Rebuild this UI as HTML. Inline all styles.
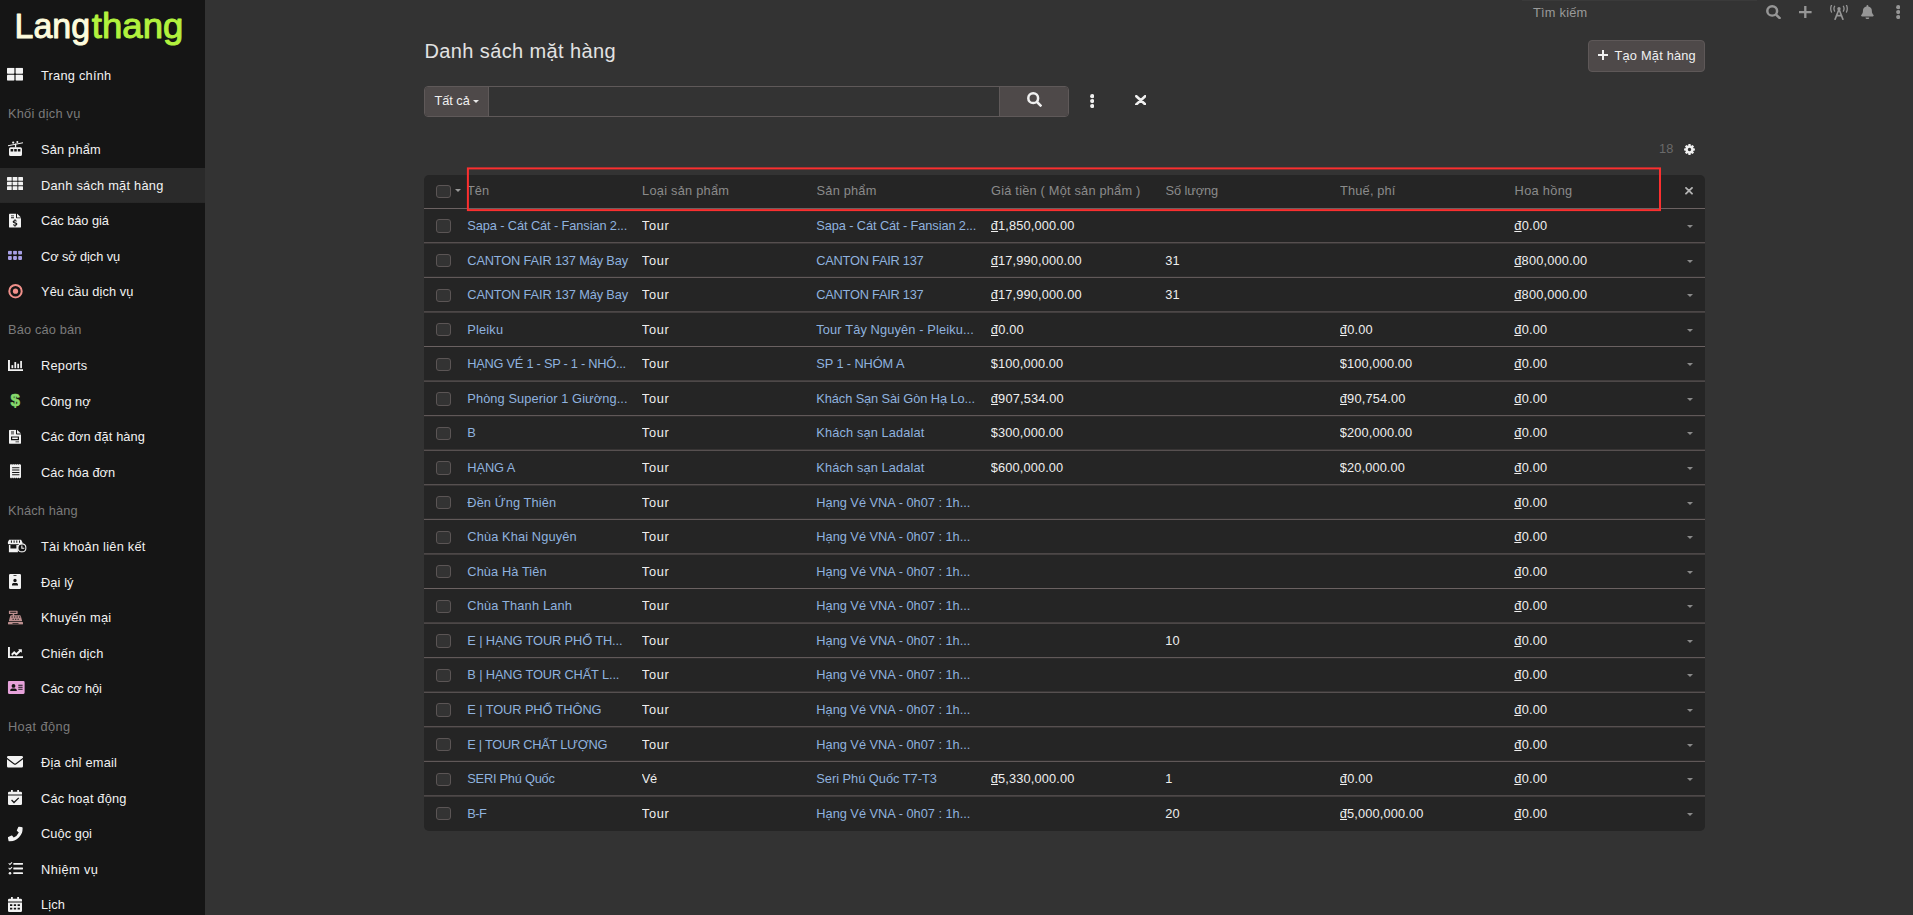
<!DOCTYPE html>
<html lang="vi"><head><meta charset="utf-8"><title>Danh sách mặt hàng</title>
<style>
*{box-sizing:border-box}
html,body{margin:0;padding:0}
body{width:1913px;height:915px;overflow:hidden;background:#333333;color:#eeeeee;font-family:"Liberation Sans",sans-serif;font-size:12.8px;position:relative}
u{text-decoration:underline;text-underline-offset:1px}
svg{display:block}
#side{position:absolute;left:0;top:0;width:205px;height:915px;background:#151515;overflow:hidden}
#logo{position:absolute;left:0;top:0}
#nav{position:absolute;left:0;top:58.400px;width:205px}
.it{position:relative;height:35.5px;line-height:35.5px;color:#f2f2f2;white-space:nowrap}
.it.on{background:linear-gradient(#2a2a2a,#2a2a2a) no-repeat;background-size:100% 34.900px}
.it .ic{position:absolute;left:0;top:-1.400px;width:30.600px;height:35.5px;display:flex;align-items:center;justify-content:center}
.it .tx{position:absolute;left:41px;top:-0.3px}
.hd{height:35.5px;line-height:35.5px;margin-top:3.2px;padding-left:8px;color:#7b7b7b;white-space:nowrap;position:relative}
.hd span{position:relative;top:-0.900px}
#main{position:absolute;left:205px;top:0;width:1708px;height:915px}
.abs{position:absolute}
#title{position:absolute;left:424.500px;top:35.700px;font-size:20px;line-height:30px;color:#e2e2e2;white-space:nowrap}
#topline{position:absolute;left:1522px;top:0;width:235px;height:1px;background:#3a3a3a}
#tsearch{position:absolute;left:1533px;top:3.700px;line-height:18px;color:#9a9a9a;white-space:nowrap}
.tic{position:absolute;color:#969696}
#create{position:absolute;left:1588px;top:40px;width:117px;height:31.500px;background:#4e4949;border:1px solid #5e5858;border-radius:4px;color:#f0f0f0}
#create .pl{position:absolute;left:8.500px;top:9.300px}
#create .tx{position:absolute;left:25.500px;top:5.500px;line-height:18px;white-space:nowrap}
#sg{position:absolute;left:424px;top:86px;width:645px;height:31px;border:1px solid #5f5959;border-radius:4px;background:#333333}
#sg .all{position:absolute;left:0;top:0;width:64px;height:29px;background:#4e4949;border-right:1px solid #5f5959;border-radius:3px 0 0 3px}
#sg .all .tx{position:absolute;left:9.500px;top:4.500px;line-height:18px;white-space:nowrap;color:#f0f0f0}
#sg .all .cr{position:absolute;left:48px;top:13px;color:#e8e8e8}
#sg .btn{position:absolute;right:0;top:0;width:69px;height:29px;background:#4e4949;border-left:1px solid #5f5959;border-radius:0 3px 3px 0;color:#f0f0f0}
#sg .btn svg{position:absolute;left:27.200px;top:5.300px}
#cnt{position:absolute;left:1659px;top:139.700px;line-height:18px;color:#6a6a6a;white-space:nowrap}
#tbl{position:absolute;left:424px;top:175px;width:1281px;height:656.300px;background:#252525;border-radius:5px;overflow:hidden}
.r{position:absolute;left:0;width:1281px;height:34.570px}
.r.h{top:0;height:34px;border-bottom:1px solid #6b6262;color:#8b8b8b}
#lines{position:absolute;left:0;top:0}
.c{position:absolute;top:0;height:100%;line-height:34px;white-space:nowrap;overflow:hidden}
.r.h .c{line-height:32.600px;height:33px}
.a{color:#8fb2df}
.cb{position:absolute;left:12.200px;top:10.400px;width:14.500px;height:13.300px;border:1px solid #5b5555;border-radius:3px;background:#333333}
.r.h .cb{top:10px}
.crt{position:absolute;color:#8a8a8a}
#red{position:absolute;left:460px;top:160px}
</style></head>
<body>
<div id="side">
<svg id="logo" width="205" height="56" viewBox="0 0 205 56"><text x="14.600" y="37.900" font-family="Liberation Sans, sans-serif" font-size="34.800" textLength="75.500" lengthAdjust="spacingAndGlyphs" stroke-width="1" stroke-linejoin="round" fill="#fdfbdc" stroke="#fdfbdc">Lang</text><text x="91.800" y="37.900" font-family="Liberation Sans, sans-serif" font-size="34.800" textLength="91.500" lengthAdjust="spacingAndGlyphs" stroke-width="1" stroke-linejoin="round" fill="#b2f23e" stroke="#b2f23e">thang</text></svg>
<div id="nav">
<div class="it"><div class="ic" style="transform:translate(0px,-0.3px);"><svg width="16" height="13" viewBox="0 0 16 13" fill="currentColor"><rect x="0" y="0" width="7.4" height="6" rx=".7"/><rect x="8.6" y="0" width="7.4" height="6" rx=".7"/><rect x="0" y="7" width="7.4" height="6" rx=".7"/><rect x="8.6" y="7" width="7.4" height="6" rx=".7"/></svg></div><div class="tx"><span style="letter-spacing:0.236px">Trang chính</span></div></div>
<div class="hd"><span style="letter-spacing:0.236px">Khối dịch vụ</span></div>
<div class="it"><div class="ic"><svg width="15" height="15" viewBox="0 0 15 15" fill="currentColor"><path d="M0 4.2 L15 1.2 L15 2.3 L0 5.3Z"/><circle cx="5.2" cy="1.6" r="1.1"/><circle cx="9.3" cy="1" r="1"/><rect x="6.9" y="2.6" width="1.3" height="4"/><path d="M2.6 6.3h9.8a1.6 1.6 0 0 1 1.6 1.6v5.5a1.6 1.6 0 0 1-1.6 1.6H2.6A1.6 1.6 0 0 1 1 13.4V7.9a1.6 1.6 0 0 1 1.6-1.6Z M2.6 8v2.6h2.6V8Z M6.2 8v2.6h2.6V8Z M9.8 8v2.6h2.6V8Z" fill-rule="evenodd"/></svg></div><div class="tx"><span style="letter-spacing:0.199px">Sản phẩm</span></div></div>
<div class="it on"><div class="ic" style="transform:translate(0px,-1px);"><svg width="16" height="13" viewBox="0 0 16 13" fill="currentColor"><rect x="0" y="0" width="4.7" height="3.7" rx=".5"/><rect x="5.65" y="0" width="4.7" height="3.7" rx=".5"/><rect x="11.3" y="0" width="4.7" height="3.7" rx=".5"/><rect x="0" y="4.65" width="4.7" height="3.7" rx=".5"/><rect x="5.65" y="4.65" width="4.7" height="3.7" rx=".5"/><rect x="11.3" y="4.65" width="4.7" height="3.7" rx=".5"/><rect x="0" y="9.3" width="4.7" height="3.7" rx=".5"/><rect x="5.65" y="9.3" width="4.7" height="3.7" rx=".5"/><rect x="11.3" y="9.3" width="4.7" height="3.7" rx=".5"/></svg></div><div class="tx"><span style="letter-spacing:0.247px">Danh sách mặt hàng</span></div></div>
<div class="it"><div class="ic" style="transform:translate(0px,0.5px);"><svg width="12" height="14.6" preserveAspectRatio="none" viewBox="0 0 12 15" fill="currentColor"><path d="M0 1.2A1.2 1.2 0 0 1 1.2 0H7v4.2a.8.8 0 0 0 .8.8H12v8.8a1.2 1.2 0 0 1-1.2 1.2H1.2A1.2 1.2 0 0 1 0 13.8Z M2 2v.9h3V2Z M2 3.9v.9h3v-.9Z M5.5 6v.9c-1.1.1-1.8.8-1.8 1.7 0 2 3 1.400 3 2.300 0 .4-.4.6-.9.6-.5 0-1-.2-1.400-.5l-.6.9c.5.4 1.100.6 1.700.7v.9h1v-.9c1.100-.1 1.800-.8 1.800-1.800 0-2-3-1.500-3-2.300 0-.3.300-.5.800-.5.400 0 .8.100 1.200.4l.5-.9c-.4-.300-.8-.4-1.300-.5V6Z" fill-rule="evenodd"/><path d="M8 0l4 4H8Z"/></svg></div><div class="tx"><span style="letter-spacing:-0.037px">Các báo giá</span></div></div>
<div class="it"><div class="ic" style="color:#a79fe6;transform:translate(0px,0.5px);"><svg width="14" height="10" viewBox="0 0 14 10" fill="currentColor"><rect x="0" y="0.3" width="3.8" height="3.8" rx=".8"/><rect x="5.1" y="0.3" width="3.8" height="3.8" rx=".8"/><rect x="10.2" y="0.3" width="3.8" height="3.8" rx=".8"/><rect x="0" y="5.6" width="3.8" height="3.8" rx=".8"/><rect x="5.1" y="5.6" width="3.8" height="3.8" rx=".8"/><rect x="10.2" y="5.6" width="3.8" height="3.8" rx=".8"/></svg></div><div class="tx"><span style="letter-spacing:-0.081px">Cơ sở dịch vụ</span></div></div>
<div class="it"><div class="ic" style="color:#f0908a;transform:translate(0px,0.7px);"><svg width="15" height="15" viewBox="0 0 15 15" fill="currentColor"><circle cx="7.5" cy="7.5" r="6.2" fill="none" stroke="currentColor" stroke-width="2"/><circle cx="7.5" cy="7.5" r="2.6"/></svg></div><div class="tx"><span style="letter-spacing:0.098px">Yêu cầu dịch vụ</span></div></div>
<div class="hd"><span style="letter-spacing:0.143px">Báo cáo bán</span></div>
<div class="it"><div class="ic"><svg width="15.5" height="11.2" preserveAspectRatio="none" viewBox="0 0 16 12" fill="currentColor"><path d="M0 0h2v10h14v2H0Z"/><rect x="3.6" y="5.5" width="1.8" height="3.3"/><rect x="6.600" y="2.200" width="1.8" height="6.600"/><rect x="9.600" y="4" width="1.8" height="4.800"/><rect x="12.600" y="1" width="1.8" height="7.800"/></svg></div><div class="tx"><span style="letter-spacing:0.243px">Reports</span></div></div>
<div class="it"><div class="ic" style="color:#86d96c;"><span style="font-weight:bold;font-size:17px;line-height:35.500px;position:relative;top:0.400px;-webkit-text-stroke:0.600px currentColor">$</span></div><div class="tx"><span style="letter-spacing:-0.018px">Công nợ</span></div></div>
<div class="it"><div class="ic" style="transform:translate(0px,0.7px);"><svg width="12" height="14.4" preserveAspectRatio="none" viewBox="0 0 12 15" fill="currentColor"><path d="M0 1.2A1.2 1.2 0 0 1 1.2 0H7v4.2a.8.8 0 0 0 .8.8H12v8.8a1.2 1.2 0 0 1-1.2 1.2H1.2A1.2 1.2 0 0 1 0 13.8Z M2 2v.9h3V2Z M2 3.900v.9h3v-.9Z M2 7v4h8V7Z M3.200 8.200h5.600v1.600H3.200Z M6.500 12.200v.9H10v-.9Z" fill-rule="evenodd"/><path d="M8 0l4 4H8Z"/></svg></div><div class="tx"><span style="letter-spacing:0.109px">Các đơn đặt hàng</span></div></div>
<div class="it"><div class="ic"><svg width="11.5" height="14.4" preserveAspectRatio="none" viewBox="0 0 12 15" fill="currentColor"><path d="M0 0l1 .9 1-.9 1 .9 1-.9 1 .9 1-.9 1 .9 1-.9 1 .9 1-.9 1 .9 1-.9v15l-1-.9-1 .9-1-.9-1 .9-1-.9-1 .9-1-.9-1 .9-1-.9-1 .9-1-.9-1 .9Z M2.200 3.300v1h7.600v-1Z M2.200 5.800v1h7.600v-1Z M2.200 8.300v1h7.600v-1Z M2.200 10.800v1h7.600v-1Z" fill-rule="evenodd"/></svg></div><div class="tx"><span style="letter-spacing:0.024px">Các hóa đơn</span></div></div>
<div class="hd"><span style="letter-spacing:0.155px">Khách hàng</span></div>
<div class="it"><div class="ic" style="transform:translate(1.6px,0.6px);"><svg width="19" height="13" viewBox="0 0 19 13" fill="currentColor"><path d="M1.600 0h11.800l1.600 3.200c0 .9-.6 1.500-1.500 1.500H1.500C.6 4.700 0 4.100 0 3.200Z M3.300.8v2.400h1V.8Z M6 .8v2.400h1V.8Z M8.700.8v2.400h1V.8Z M11.400.8v2.400h1V.8Z" fill-rule="evenodd"/><path d="M1.300 5.500h1.500v3.500h6v-3.500h1.500v7.500H1.300Z"/><circle cx="14.300" cy="8.300" r="4.100" fill="none" stroke="currentColor" stroke-width="1.300"/><path d="M13.700 5.800h1.100v2.300h1.900v1.100h-3Z"/></svg></div><div class="tx"><span style="letter-spacing:0.236px">Tài khoản liên kết</span></div></div>
<div class="it"><div class="ic"><svg width="12" height="15" viewBox="0 0 12 15" fill="currentColor"><path d="M1.300 0h9.400A1.300 1.300 0 0 1 12 1.300v12.400a1.300 1.300 0 0 1-1.300 1.300H1.300A1.300 1.300 0 0 1 0 13.700V1.300A1.300 1.300 0 0 1 1.300 0Z M4.500 1.300v.8h3v-.8Z M6 4.800a1.700 1.700 0 1 0 0 3.400 1.700 1.700 0 0 0 0-3.400Z M3 11.400h6v-.7c0-1-.8-1.700-1.800-1.700H4.800c-1 0-1.800.7-1.800 1.700Z" fill-rule="evenodd"/></svg></div><div class="tx"><span style="letter-spacing:0.099px">Đại lý</span></div></div>
<div class="it"><div class="ic" style="color:#bd8f8f;transform:translate(0px,0.6px);"><svg width="15" height="14.2" preserveAspectRatio="none" viewBox="0 0 15 14.5" fill="currentColor"><path d="M1.500 0h7.500a.6.6 0 0 1 .6.600v2.300a.6.6 0 0 1-.6.600H6.200v1.200h5.500c.6 0 1.100.4 1.200 1l1.300 5.300H.8l1.300-5.300c.100-.6.600-1 1.200-1h1.400V3.500H1.500a.6.6 0 0 1-.6-.6V.6A.6.6 0 0 1 1.500 0Z M2.200 1.100v1.200h6.100V1.100Z M3.500 6v1h1.300V6Z M6 6v1h1.300V6Z M8.500 6v1h1.300V6Z M11 6v1h1.300V6Z M4.500 8.300v1h1.300v-1Z M7 8.300v1h1.300v-1Z M9.500 8.300v1h1.300v-1Z" fill-rule="evenodd"/><path d="M.5 11.700h14a.5.500 0 0 1 .5.500v1.800a.5.500 0 0 1-.5.500H.5a.5.500 0 0 1-.5-.5v-1.800a.5.500 0 0 1 .5-.5Z M4.500 12.600v.9h6v-.9Z" fill-rule="evenodd"/></svg></div><div class="tx"><span style="letter-spacing:0.292px">Khuyến mại</span></div></div>
<div class="it"><div class="ic"><svg width="15.3" height="11.2" preserveAspectRatio="none" viewBox="0 0 16 12" fill="currentColor"><path d="M0 0h2v10h14v2H0Z"/><path d="M3.300 7.600L6.500 4.300l2.200 2.200 3-3-1.200-1.200h4v4l-1.300-1.300-4.500 4.500-2.200-2.200-2 2.100Z"/></svg></div><div class="tx"><span style="letter-spacing:0.208px">Chiến dịch</span></div></div>
<div class="it"><div class="ic" style="color:#e6a2da;transform:translate(0.8px,0px);"><svg width="17" height="13" viewBox="0 0 17 13" fill="currentColor"><path d="M1.400 0h14.200A1.400 1.400 0 0 1 17 1.400v10.200a1.400 1.400 0 0 1-1.400 1.400H1.400A1.400 1.400 0 0 1 0 11.600V1.400A1.400 1.400 0 0 1 1.400 0Z M5.700 3a1.900 1.900 0 1 0 0 3.800 1.900 1.900 0 0 0 0-3.800Z M2.400 10h6.600v-.6c0-1.100-.9-1.900-2-1.900H4.400c-1.100 0-2 .8-2 1.900Z M10.500 3.800v.9h4.300v-.9Z M10.500 5.800v.9h4.300v-.9Z M10.500 7.800v.9h4.300v-.9Z" fill-rule="evenodd"/></svg></div><div class="tx"><span style="letter-spacing:-0.106px">Các cơ hội</span></div></div>
<div class="hd"><span style="letter-spacing:0.380px">Hoạt động</span></div>
<div class="it"><div class="ic"><svg width="16" height="11.5" viewBox="0 0 16 11.5" fill="currentColor"><path d="M1.300 0h13.400A1.300 1.300 0 0 1 16 1.300v.5L8.800 7.200a1.300 1.300 0 0 1-1.600 0L0 1.800v-.5A1.300 1.300 0 0 1 1.300 0Z"/><path d="M0 3.300l6.600 5a2.300 2.300 0 0 0 2.800 0l6.600-5v6.900a1.300 1.300 0 0 1-1.300 1.300H1.300A1.300 1.300 0 0 1 0 10.200Z"/></svg></div><div class="tx"><span style="letter-spacing:0.218px">Địa chỉ email</span></div></div>
<div class="it"><div class="ic"><svg width="14" height="15" viewBox="0 0 14 15" fill="currentColor"><path d="M3 0h1.800v1.700h4.400V0H11v1.700h1.700A1.300 1.300 0 0 1 14 3v1.500H0V3a1.300 1.300 0 0 1 1.300-1.300H3Z"/><path d="M0 5.400h14v8.300a1.300 1.300 0 0 1-1.300 1.300H1.300A1.300 1.300 0 0 1 0 13.700Z M10.300 7.400L6 11.600 4 9.600l-.9.9L6 13.400l5.200-5.100Z" fill-rule="evenodd"/></svg></div><div class="tx"><span style="letter-spacing:0.174px">Các hoạt động</span></div></div>
<div class="it"><div class="ic" style="transform:translate(-0.2px,0.4px);"><svg width="15" height="15" viewBox="0 0 15 15" fill="currentColor"><path d="M14.500 10.600l-3.200-1.400a.7.7 0 0 0-.8.200l-1.400 1.700A10.600 10.600 0 0 1 4 6l1.700-1.400a.7.7 0 0 0 .2-.8L4.500.5a.7.7 0 0 0-.8-.4L.6.800A.7.7 0 0 0 0 1.500 13.500 13.500 0 0 0 13.500 15a.7.7 0 0 0 .7-.5l.7-3.100a.7.7 0 0 0-.4-.8Z" transform="scale(-1,1) translate(-15,0) rotate(0)"/></svg></div><div class="tx"><span style="letter-spacing:0.055px">Cuộc gọi</span></div></div>
<div class="it"><div class="ic"><svg width="15" height="13" viewBox="0 0 15 13" fill="currentColor"><rect x="5.300" y=".9" width="9.700" height="1.800" rx=".4"/><rect x="5.300" y="5.600" width="9.700" height="1.800" rx=".4"/><rect x="5.300" y="10.300" width="9.700" height="1.800" rx=".4"/><path d="M.3 1.600l.7-.7.9.9L3.700 0l.7.7L1.900 3.200Z"/><path d="M.3 6.300l.7-.7.900.9L3.700 4.700l.7.7L1.900 7.900Z"/><circle cx="2" cy="11.200" r="1.300"/></svg></div><div class="tx"><span style="letter-spacing:0.406px">Nhiệm vụ</span></div></div>
<div class="it"><div class="ic"><svg width="14" height="15" viewBox="0 0 14 15" fill="currentColor"><path d="M3 0h1.800v1.700h4.400V0H11v1.700h1.700A1.300 1.300 0 0 1 14 3v1.500H0V3a1.300 1.300 0 0 1 1.300-1.300H3Z"/><path d="M0 5.400h14v8.300a1.300 1.300 0 0 1-1.300 1.300H1.300A1.300 1.300 0 0 1 0 13.700Z M2 7.200v1.900h2.300V7.200Z M5.800 7.200v1.900h2.300V7.200Z M9.600 7.200v1.900h2.300V7.200Z M2 10.700v1.900h2.300v-1.900Z M5.800 10.700v1.900h2.300v-1.900Z M9.600 10.700v1.900h2.300v-1.900Z" fill-rule="evenodd"/></svg></div><div class="tx"><span style="letter-spacing:0.102px">Lịch</span></div></div>
</div>
</div>
<div id="topline"></div>
<div id="tsearch"><span style="letter-spacing:0.229px">Tìm kiếm</span></div>
<div class="tic" style="left:1766.200px;top:4.800px"><svg width="15" height="14.4" preserveAspectRatio="none" viewBox="0 0 15 15" fill="currentColor"><circle cx="6.200" cy="6.200" r="4.900" fill="none" stroke="currentColor" stroke-width="2.500"/><path d="M9.100 10.900l1.800-1.800 3.900 3.900a.7.700 0 0 1 0 1l-.8.800a.7.700 0 0 1-1 0Z"/></svg></div>
<div class="tic" style="left:1799.200px;top:5.900px"><svg width="12.6" height="12.4" preserveAspectRatio="none" viewBox="0 0 13 13" fill="currentColor"><path d="M5.300 0h2.400v5.300H13v2.400H7.700V13H5.300V7.700H0V5.300h5.300Z"/></svg></div>
<div class="tic" style="left:1830px;top:5px"><svg width="18" height="14.5" viewBox="0 0 18 14.5" fill="currentColor"><circle cx="9" cy="3.700" r="1.700"/><path d="M9 4.200L5.100 14.200M9 4.200L12.900 14.200M6.400 10.700H11.600" fill="none" stroke="currentColor" stroke-width="1.700" stroke-linecap="round"/><path d="M1.500 .3A8.200 8.200 0 0 0 1.500 7.100M16.500 .3A8.200 8.200 0 0 1 16.500 7.100M4.600 1.300A5 5 0 0 0 4.600 6.100M13.400 1.300A5 5 0 0 1 13.400 6.100" fill="none" stroke="currentColor" stroke-width="1.300" stroke-linecap="round"/></svg></div>
<div class="tic" style="left:1861px;top:4.500px"><svg width="12.8" height="14.3" preserveAspectRatio="none" viewBox="0 0 13 15" fill="currentColor"><path d="M6.500 0a.9.900 0 0 1 .9.900v.6a4.500 4.500 0 0 1 3.600 4.400c0 2.800.8 3.700 1.700 4.600.5.500.1 1.500-.7 1.500H1c-.8 0-1.200-1-.7-1.500C1.200 9.600 2 8.700 2 5.900a4.500 4.500 0 0 1 3.600-4.400V.9A.9.900 0 0 1 6.500 0Z"/><path d="M4.600 13h3.800a1.900 1.900 0 0 1-3.800 0Z"/></svg></div>
<div class="tic" style="left:1896px;top:4.500px"><svg width="4.4" height="14.2" viewBox="0 0 4.4 14.2" fill="currentColor"><circle cx="2.200" cy="2.200" r="2.100"/><circle cx="2.200" cy="7.100" r="2.100"/><circle cx="2.200" cy="12" r="2.100"/></svg></div>
<div id="title"><span style="letter-spacing:0.385px">Danh sách mặt hàng</span></div>
<div id="create"><div class="pl"><svg width="10" height="10" viewBox="0 0 10 10" fill="currentColor"><path d="M4 0h2v4h4v2H6v4H4V6H0V4h4Z"/></svg></div><div class="tx"><span style="letter-spacing:0.207px">Tạo Mặt hàng</span></div></div>
<div id="sg"><div class="all"><div class="tx"><span style="letter-spacing:-0.044px">Tất cả</span></div><div class="cr"><svg width="6" height="3" viewBox="0 0 6 3" fill="currentColor"><path d="M0 0h6L3 3Z"/></svg></div></div><div class="btn"><svg width="15" height="15" viewBox="0 0 15 15" fill="currentColor"><circle cx="6.200" cy="6.200" r="4.900" fill="none" stroke="currentColor" stroke-width="2.500"/><path d="M9.100 10.900l1.800-1.800 3.900 3.900a.7.700 0 0 1 0 1l-.8.800a.7.700 0 0 1-1 0Z"/></svg></div></div>
<div class="abs" style="left:1090.100px;top:93.700px;color:#f0f0f0"><svg width="4.4" height="14.2" viewBox="0 0 4.4 14.2" fill="currentColor"><circle cx="2.200" cy="2.200" r="2.100"/><circle cx="2.200" cy="7.100" r="2.100"/><circle cx="2.200" cy="12" r="2.100"/></svg></div>
<div class="abs" style="left:1134.700px;top:94.600px;color:#f0f0f0"><svg width="11.5" height="10.6" viewBox="0 0 11.5 10.6" fill="currentColor"><path d="M1.300 1.200L10.200 9.400M10.200 1.200L1.300 9.400" fill="none" stroke="currentColor" stroke-width="2.600" stroke-linecap="round"/></svg></div>
<div id="cnt"><span style="letter-spacing:0.203px">18</span></div>
<div class="abs" style="left:1683.500px;top:143.800px;color:#f0f0f0"><svg width="11" height="11" viewBox="0 0 11 11" fill="currentColor"><path d="M4.41 0.11 L6.59 0.11 L6.71 1.58 L7.41 1.87 L8.54 0.92 L10.08 2.46 L9.13 3.59 L9.42 4.29 L10.89 4.41 L10.89 6.59 L9.42 6.71 L9.13 7.41 L10.08 8.54 L8.54 10.08 L7.41 9.13 L6.71 9.42 L6.59 10.89 L4.41 10.89 L4.29 9.42 L3.59 9.13 L2.46 10.08 L0.92 8.54 L1.87 7.41 L1.58 6.71 L0.11 6.59 L0.11 4.41 L1.58 4.29 L1.87 3.59 L0.92 2.46 L2.46 0.92 L3.59 1.87 L4.29 1.58Z M3.8 5.5 a1.7 1.7 0 1 0 3.400 0 a1.7 1.7 0 1 0 -3.400 0Z" fill-rule="evenodd"/></svg></div>
<div id="tbl">
<div class="r h"><div class="cb"></div><div class="crt" style="left:30.500px;top:14px;color:#9a9a9a"><svg width="6" height="3" viewBox="0 0 6 3" fill="currentColor"><path d="M0 0h6L3 3Z"/></svg></div><div class="c" style="left:43.0px;width:164.5px"><span style="letter-spacing:0.010px">Tên</span></div><div class="c" style="left:218.1px;width:164.5px"><span style="letter-spacing:0.239px">Loại sản phẩm</span></div><div class="c" style="left:392.6px;width:164.5px"><span style="letter-spacing:0.199px">Sản phẩm</span></div><div class="c" style="left:567.1px;width:164.5px"><span style="letter-spacing:0.202px">Giá tiền ( Một sản phẩm )</span></div><div class="c" style="left:741.6px;width:164.5px"><span style="letter-spacing:-0.109px">Số lượng</span></div><div class="c" style="left:916.1px;width:164.5px"><span style="letter-spacing:0.156px">Thuế, phí</span></div><div class="c" style="left:1090.6px;width:164.5px"><span style="letter-spacing:0.303px">Hoa hồng</span></div><div class="crt" style="left:1260.500px;top:12px;color:#b4b4b4"><svg width="8" height="7.6" viewBox="0 0 8 7.6" fill="currentColor"><path d="M1 .9L7 6.700M7 .9L1 6.700" fill="none" stroke="currentColor" stroke-width="1.800" stroke-linecap="round"/></svg></div></div>
<div class="r" style="top:34.00px"><div class="cb"></div><div class="c a" style="left:43.3px;width:164.5px"><span style="letter-spacing:-0.101px">Sapa - Cát Cát - Fansian 2...</span></div><div class="c" style="left:217.8px;width:164.5px"><span style="letter-spacing:0.730px">Tour</span></div><div class="c a" style="left:392.3px;width:164.5px"><span style="letter-spacing:-0.101px">Sapa - Cát Cát - Fansian 2...</span></div><div class="c" style="left:566.8px;width:164.5px"><span style="letter-spacing:0.141px"><u>đ</u>1,850,000.00</span></div><div class="c" style="left:1090.3px;width:164.5px"><span style="letter-spacing:0.225px"><u>đ</u>0.00</span></div><div class="crt" style="left:1263px;top:16px"><svg width="6" height="3" viewBox="0 0 6 3" fill="currentColor"><path d="M0 0h6L3 3Z"/></svg></div></div>
<div class="r" style="top:68.57px"><div class="cb"></div><div class="c a" style="left:43.3px;width:164.5px"><span style="letter-spacing:-0.147px">CANTON FAIR 137 Máy Bay</span></div><div class="c" style="left:217.8px;width:164.5px"><span style="letter-spacing:0.730px">Tour</span></div><div class="c a" style="left:392.3px;width:164.5px"><span style="letter-spacing:-0.234px">CANTON FAIR 137</span></div><div class="c" style="left:566.8px;width:164.5px"><span style="letter-spacing:0.146px"><u>đ</u>17,990,000.00</span></div><div class="c" style="left:741.3px;width:164.5px"><span style="letter-spacing:0.203px">31</span></div><div class="c" style="left:1090.3px;width:164.5px"><span style="letter-spacing:0.170px"><u>đ</u>800,000.00</span></div><div class="crt" style="left:1263px;top:16px"><svg width="6" height="3" viewBox="0 0 6 3" fill="currentColor"><path d="M0 0h6L3 3Z"/></svg></div></div>
<div class="r" style="top:103.14px"><div class="cb"></div><div class="c a" style="left:43.3px;width:164.5px"><span style="letter-spacing:-0.147px">CANTON FAIR 137 Máy Bay</span></div><div class="c" style="left:217.8px;width:164.5px"><span style="letter-spacing:0.730px">Tour</span></div><div class="c a" style="left:392.3px;width:164.5px"><span style="letter-spacing:-0.234px">CANTON FAIR 137</span></div><div class="c" style="left:566.8px;width:164.5px"><span style="letter-spacing:0.146px"><u>đ</u>17,990,000.00</span></div><div class="c" style="left:741.3px;width:164.5px"><span style="letter-spacing:0.203px">31</span></div><div class="c" style="left:1090.3px;width:164.5px"><span style="letter-spacing:0.170px"><u>đ</u>800,000.00</span></div><div class="crt" style="left:1263px;top:16px"><svg width="6" height="3" viewBox="0 0 6 3" fill="currentColor"><path d="M0 0h6L3 3Z"/></svg></div></div>
<div class="r" style="top:137.71px"><div class="cb"></div><div class="c a" style="left:43.3px;width:164.5px"><span style="letter-spacing:0.177px">Pleiku</span></div><div class="c" style="left:217.8px;width:164.5px"><span style="letter-spacing:0.730px">Tour</span></div><div class="c a" style="left:392.3px;width:164.5px"><span style="letter-spacing:0.133px">Tour Tây Nguyên - Pleiku...</span></div><div class="c" style="left:566.8px;width:164.5px"><span style="letter-spacing:0.225px"><u>đ</u>0.00</span></div><div class="c" style="left:915.8px;width:164.5px"><span style="letter-spacing:0.225px"><u>đ</u>0.00</span></div><div class="c" style="left:1090.3px;width:164.5px"><span style="letter-spacing:0.225px"><u>đ</u>0.00</span></div><div class="crt" style="left:1263px;top:16px"><svg width="6" height="3" viewBox="0 0 6 3" fill="currentColor"><path d="M0 0h6L3 3Z"/></svg></div></div>
<div class="r" style="top:172.28px"><div class="cb"></div><div class="c a" style="left:43.3px;width:164.5px"><span style="letter-spacing:-0.253px">HẠNG VÉ 1 - SP - 1 - NHÓ...</span></div><div class="c" style="left:217.8px;width:164.5px"><span style="letter-spacing:0.730px">Tour</span></div><div class="c a" style="left:392.3px;width:164.5px"><span style="letter-spacing:-0.100px">SP 1 - NHÓM A</span></div><div class="c" style="left:566.8px;width:164.5px"><span style="letter-spacing:0.124px">$100,000.00</span></div><div class="c" style="left:915.8px;width:164.5px"><span style="letter-spacing:0.124px">$100,000.00</span></div><div class="c" style="left:1090.3px;width:164.5px"><span style="letter-spacing:0.225px"><u>đ</u>0.00</span></div><div class="crt" style="left:1263px;top:16px"><svg width="6" height="3" viewBox="0 0 6 3" fill="currentColor"><path d="M0 0h6L3 3Z"/></svg></div></div>
<div class="r" style="top:206.85px"><div class="cb"></div><div class="c a" style="left:43.3px;width:164.5px"><span style="letter-spacing:0.096px">Phòng Superior 1 Giường...</span></div><div class="c" style="left:217.8px;width:164.5px"><span style="letter-spacing:0.730px">Tour</span></div><div class="c a" style="left:392.3px;width:164.5px"><span style="letter-spacing:-0.084px">Khách Sạn Sài Gòn Hạ Lo...</span></div><div class="c" style="left:566.8px;width:164.5px"><span style="letter-spacing:0.170px"><u>đ</u>907,534.00</span></div><div class="c" style="left:915.8px;width:164.5px"><span style="letter-spacing:0.169px"><u>đ</u>90,754.00</span></div><div class="c" style="left:1090.3px;width:164.5px"><span style="letter-spacing:0.225px"><u>đ</u>0.00</span></div><div class="crt" style="left:1263px;top:16px"><svg width="6" height="3" viewBox="0 0 6 3" fill="currentColor"><path d="M0 0h6L3 3Z"/></svg></div></div>
<div class="r" style="top:241.42px"><div class="cb"></div><div class="c a" style="left:43.3px;width:164.5px"><span style="letter-spacing:-0.266px">B</span></div><div class="c" style="left:217.8px;width:164.5px"><span style="letter-spacing:0.730px">Tour</span></div><div class="c a" style="left:392.3px;width:164.5px"><span style="letter-spacing:0.124px">Khách sạn Ladalat</span></div><div class="c" style="left:566.8px;width:164.5px"><span style="letter-spacing:0.124px">$300,000.00</span></div><div class="c" style="left:915.8px;width:164.5px"><span style="letter-spacing:0.124px">$200,000.00</span></div><div class="c" style="left:1090.3px;width:164.5px"><span style="letter-spacing:0.225px"><u>đ</u>0.00</span></div><div class="crt" style="left:1263px;top:16px"><svg width="6" height="3" viewBox="0 0 6 3" fill="currentColor"><path d="M0 0h6L3 3Z"/></svg></div></div>
<div class="r" style="top:275.99px"><div class="cb"></div><div class="c a" style="left:43.3px;width:164.5px"><span style="letter-spacing:-0.078px">HẠNG A</span></div><div class="c" style="left:217.8px;width:164.5px"><span style="letter-spacing:0.730px">Tour</span></div><div class="c a" style="left:392.3px;width:164.5px"><span style="letter-spacing:0.124px">Khách sạn Ladalat</span></div><div class="c" style="left:566.8px;width:164.5px"><span style="letter-spacing:0.124px">$600,000.00</span></div><div class="c" style="left:915.8px;width:164.5px"><span style="letter-spacing:0.116px">$20,000.00</span></div><div class="c" style="left:1090.3px;width:164.5px"><span style="letter-spacing:0.225px"><u>đ</u>0.00</span></div><div class="crt" style="left:1263px;top:16px"><svg width="6" height="3" viewBox="0 0 6 3" fill="currentColor"><path d="M0 0h6L3 3Z"/></svg></div></div>
<div class="r" style="top:310.56px"><div class="cb"></div><div class="c a" style="left:43.3px;width:164.5px"><span style="letter-spacing:0.099px">Đền Ứng Thiên</span></div><div class="c" style="left:217.8px;width:164.5px"><span style="letter-spacing:0.730px">Tour</span></div><div class="c a" style="left:392.3px;width:164.5px"><span style="letter-spacing:-0.014px">Hạng Vé VNA - 0h07 : 1h...</span></div><div class="c" style="left:1090.3px;width:164.5px"><span style="letter-spacing:0.225px"><u>đ</u>0.00</span></div><div class="crt" style="left:1263px;top:16px"><svg width="6" height="3" viewBox="0 0 6 3" fill="currentColor"><path d="M0 0h6L3 3Z"/></svg></div></div>
<div class="r" style="top:345.13px"><div class="cb"></div><div class="c a" style="left:43.3px;width:164.5px"><span style="letter-spacing:0.124px">Chùa Khai Nguyên</span></div><div class="c" style="left:217.8px;width:164.5px"><span style="letter-spacing:0.730px">Tour</span></div><div class="c a" style="left:392.3px;width:164.5px"><span style="letter-spacing:-0.014px">Hạng Vé VNA - 0h07 : 1h...</span></div><div class="c" style="left:1090.3px;width:164.5px"><span style="letter-spacing:0.225px"><u>đ</u>0.00</span></div><div class="crt" style="left:1263px;top:16px"><svg width="6" height="3" viewBox="0 0 6 3" fill="currentColor"><path d="M0 0h6L3 3Z"/></svg></div></div>
<div class="r" style="top:379.70px"><div class="cb"></div><div class="c a" style="left:43.3px;width:164.5px"><span style="letter-spacing:0.094px">Chùa Hà Tiên</span></div><div class="c" style="left:217.8px;width:164.5px"><span style="letter-spacing:0.730px">Tour</span></div><div class="c a" style="left:392.3px;width:164.5px"><span style="letter-spacing:-0.014px">Hạng Vé VNA - 0h07 : 1h...</span></div><div class="c" style="left:1090.3px;width:164.5px"><span style="letter-spacing:0.225px"><u>đ</u>0.00</span></div><div class="crt" style="left:1263px;top:16px"><svg width="6" height="3" viewBox="0 0 6 3" fill="currentColor"><path d="M0 0h6L3 3Z"/></svg></div></div>
<div class="r" style="top:414.27px"><div class="cb"></div><div class="c a" style="left:43.3px;width:164.5px"><span style="letter-spacing:0.166px">Chùa Thanh Lanh</span></div><div class="c" style="left:217.8px;width:164.5px"><span style="letter-spacing:0.730px">Tour</span></div><div class="c a" style="left:392.3px;width:164.5px"><span style="letter-spacing:-0.014px">Hạng Vé VNA - 0h07 : 1h...</span></div><div class="c" style="left:1090.3px;width:164.5px"><span style="letter-spacing:0.225px"><u>đ</u>0.00</span></div><div class="crt" style="left:1263px;top:16px"><svg width="6" height="3" viewBox="0 0 6 3" fill="currentColor"><path d="M0 0h6L3 3Z"/></svg></div></div>
<div class="r" style="top:448.84px"><div class="cb"></div><div class="c a" style="left:43.3px;width:164.5px"><span style="letter-spacing:-0.109px">E | HẠNG TOUR PHỔ TH...</span></div><div class="c" style="left:217.8px;width:164.5px"><span style="letter-spacing:0.730px">Tour</span></div><div class="c a" style="left:392.3px;width:164.5px"><span style="letter-spacing:-0.014px">Hạng Vé VNA - 0h07 : 1h...</span></div><div class="c" style="left:741.3px;width:164.5px"><span style="letter-spacing:0.203px">10</span></div><div class="c" style="left:1090.3px;width:164.5px"><span style="letter-spacing:0.225px"><u>đ</u>0.00</span></div><div class="crt" style="left:1263px;top:16px"><svg width="6" height="3" viewBox="0 0 6 3" fill="currentColor"><path d="M0 0h6L3 3Z"/></svg></div></div>
<div class="r" style="top:483.41px"><div class="cb"></div><div class="c a" style="left:43.3px;width:164.5px"><span style="letter-spacing:-0.121px">B | HẠNG TOUR CHẤT L...</span></div><div class="c" style="left:217.8px;width:164.5px"><span style="letter-spacing:0.730px">Tour</span></div><div class="c a" style="left:392.3px;width:164.5px"><span style="letter-spacing:-0.014px">Hạng Vé VNA - 0h07 : 1h...</span></div><div class="c" style="left:1090.3px;width:164.5px"><span style="letter-spacing:0.225px"><u>đ</u>0.00</span></div><div class="crt" style="left:1263px;top:16px"><svg width="6" height="3" viewBox="0 0 6 3" fill="currentColor"><path d="M0 0h6L3 3Z"/></svg></div></div>
<div class="r" style="top:517.98px"><div class="cb"></div><div class="c a" style="left:43.3px;width:164.5px"><span style="letter-spacing:-0.081px">E | TOUR PHỔ THÔNG</span></div><div class="c" style="left:217.8px;width:164.5px"><span style="letter-spacing:0.730px">Tour</span></div><div class="c a" style="left:392.3px;width:164.5px"><span style="letter-spacing:-0.014px">Hạng Vé VNA - 0h07 : 1h...</span></div><div class="c" style="left:1090.3px;width:164.5px"><span style="letter-spacing:0.225px"><u>đ</u>0.00</span></div><div class="crt" style="left:1263px;top:16px"><svg width="6" height="3" viewBox="0 0 6 3" fill="currentColor"><path d="M0 0h6L3 3Z"/></svg></div></div>
<div class="r" style="top:552.55px"><div class="cb"></div><div class="c a" style="left:43.3px;width:164.5px"><span style="letter-spacing:-0.257px">E | TOUR CHẤT LƯỢNG</span></div><div class="c" style="left:217.8px;width:164.5px"><span style="letter-spacing:0.730px">Tour</span></div><div class="c a" style="left:392.3px;width:164.5px"><span style="letter-spacing:-0.014px">Hạng Vé VNA - 0h07 : 1h...</span></div><div class="c" style="left:1090.3px;width:164.5px"><span style="letter-spacing:0.225px"><u>đ</u>0.00</span></div><div class="crt" style="left:1263px;top:16px"><svg width="6" height="3" viewBox="0 0 6 3" fill="currentColor"><path d="M0 0h6L3 3Z"/></svg></div></div>
<div class="r" style="top:587.12px"><div class="cb"></div><div class="c a" style="left:43.3px;width:164.5px"><span style="letter-spacing:-0.236px">SERI Phú Quốc</span></div><div class="c" style="left:217.8px;width:164.5px"><span style="letter-spacing:-0.414px">Vé</span></div><div class="c a" style="left:392.3px;width:164.5px"><span style="letter-spacing:-0.009px">Seri Phú Quốc T7-T3</span></div><div class="c" style="left:566.8px;width:164.5px"><span style="letter-spacing:0.141px"><u>đ</u>5,330,000.00</span></div><div class="c" style="left:741.3px;width:164.5px"><span style="letter-spacing:0.203px">1</span></div><div class="c" style="left:915.8px;width:164.5px"><span style="letter-spacing:0.225px"><u>đ</u>0.00</span></div><div class="c" style="left:1090.3px;width:164.5px"><span style="letter-spacing:0.225px"><u>đ</u>0.00</span></div><div class="crt" style="left:1263px;top:16px"><svg width="6" height="3" viewBox="0 0 6 3" fill="currentColor"><path d="M0 0h6L3 3Z"/></svg></div></div>
<div class="r last" style="top:621.69px"><div class="cb"></div><div class="c a" style="left:43.3px;width:164.5px"><span style="letter-spacing:-0.542px">B-F</span></div><div class="c" style="left:217.8px;width:164.5px"><span style="letter-spacing:0.730px">Tour</span></div><div class="c a" style="left:392.3px;width:164.5px"><span style="letter-spacing:-0.014px">Hạng Vé VNA - 0h07 : 1h...</span></div><div class="c" style="left:741.3px;width:164.5px"><span style="letter-spacing:0.203px">20</span></div><div class="c" style="left:915.8px;width:164.5px"><span style="letter-spacing:0.141px"><u>đ</u>5,000,000.00</span></div><div class="c" style="left:1090.3px;width:164.5px"><span style="letter-spacing:0.225px"><u>đ</u>0.00</span></div><div class="crt" style="left:1263px;top:16px"><svg width="6" height="3" viewBox="0 0 6 3" fill="currentColor"><path d="M0 0h6L3 3Z"/></svg></div></div>
<svg id="lines" width="1281" height="657" viewBox="0 0 1281 657" fill="#6b6262"><rect x="0" y="67.30" width="1281" height="1"/><rect x="0" y="101.87" width="1281" height="1"/><rect x="0" y="136.44" width="1281" height="1"/><rect x="0" y="171.01" width="1281" height="1"/><rect x="0" y="205.58" width="1281" height="1"/><rect x="0" y="240.15" width="1281" height="1"/><rect x="0" y="274.72" width="1281" height="1"/><rect x="0" y="309.29" width="1281" height="1"/><rect x="0" y="343.86" width="1281" height="1"/><rect x="0" y="378.43" width="1281" height="1"/><rect x="0" y="413.00" width="1281" height="1"/><rect x="0" y="447.57" width="1281" height="1"/><rect x="0" y="482.14" width="1281" height="1"/><rect x="0" y="516.71" width="1281" height="1"/><rect x="0" y="551.28" width="1281" height="1"/><rect x="0" y="585.85" width="1281" height="1"/><rect x="0" y="620.42" width="1281" height="1"/></svg>
</div>
<svg id="red" width="1210" height="60" viewBox="460 160 1210 60"><rect x="467.900" y="168.400" width="1192.100" height="41.700" fill="none" stroke="#fb2f2f" stroke-width="2"/></svg>
</body></html>
